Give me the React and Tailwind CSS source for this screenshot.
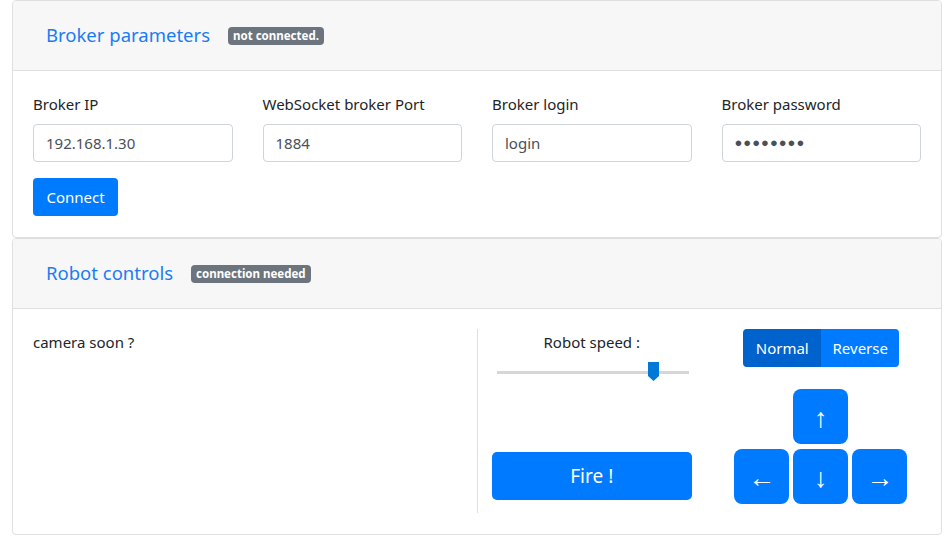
import React from "react";

const font = { fontFamily: '"Noto Sans", "Open Sans", sans-serif' };

function Field({ label, value, password }) {
  return (
    <div className="flex flex-col">
      <label className="text-[15px] leading-6 text-[#212529] mb-[8px]">{label}</label>
      <div className="h-[38px] border border-[#ced4da] rounded-[4px] bg-white px-[12px] flex items-center text-[15px] text-[#495057]">
        {password ? (
          <span className="tracking-[1px] text-[13px] text-[#495057]">●●●●●●●●</span>
        ) : (
          value
        )}
      </div>
    </div>
  );
}

function Header({ title, badge }) {
  return (
    <div className="h-[70px] bg-[#f7f7f7] border-b border-[#dfdfdf] flex items-center pl-[33px]">
      <span className="text-[18.5px] text-[#1a7cf5] leading-none">{title}</span>
      <span className="ml-[18px] bg-[#6c757d] text-white text-[11.5px] font-bold rounded-[4px] px-[5px] h-[18px] flex items-center leading-none">
        {badge}
      </span>
    </div>
  );
}

function Arrow({ children }) {
  return (
    <div className="w-[55px] h-[55px] bg-[#007bff] rounded-[8px] flex items-center justify-center text-white text-[27px] leading-none">
      {children}
    </div>
  );
}

export default function App() {
  return (
    <div className="w-[951px] h-[550px] bg-white pl-[12px]" style={font}>
      <div className="w-[930px] border border-[#dfdfdf] rounded-[4px] overflow-hidden">
        <Header title="Broker parameters" badge="not connected." />
        <div className="pt-[21px] pb-[21px] px-[20px]">
          <div className="grid grid-cols-4 gap-x-[30px]">
            <Field label="Broker IP" value="192.168.1.30" />
            <Field label="WebSocket broker Port" value="1884" />
            <Field label="Broker login" value="login" />
            <Field label="Broker password" password />
          </div>
          <div className="mt-[16px] w-[85px] h-[38px] bg-[#007bff] text-white rounded-[4px] flex items-center justify-center text-[15px]">
            Connect
          </div>
        </div>
      </div>
      <div className="w-[930px] border border-[#dfdfdf] rounded-[4px] overflow-hidden">
        <Header title="Robot controls" badge="connection needed" />
        <div className="pt-[20px] pb-[21px] px-[20px]">
          <div className="grid grid-cols-4 gap-x-[30px] h-[184px]">
            <div className="col-span-2 text-[15px] text-[#212529] leading-6 mt-[1px]">camera soon ?</div>
            <div className="relative flex flex-col items-center">
              <div className="absolute left-[-15px] top-0 bottom-0 border-l border-[#dfdfdf]"></div>
              <div className="text-[15px] text-[#212529] leading-6 mt-[1px]">Robot speed :</div>
              <div className="relative w-[192px] h-[20px] mt-[8px] ml-[2px] self-center">
                <div className="absolute left-0 right-0 top-[9px] h-[3px] bg-[#d6d6d6]"></div>
                <svg className="absolute left-[151px] top-0" width="11" height="19" viewBox="0 0 11 19">
                  <path d="M0 0 H11 V14 L5.5 19 L0 14 Z" fill="#0078d7" />
                </svg>
              </div>
              <div className="mt-auto mb-[13px] w-full h-[48px] bg-[#007bff] text-white rounded-[5px] flex items-center justify-center text-[19px]">
                Fire !
              </div>
            </div>
            <div className="flex flex-col items-center">
              <div className="flex h-[38px] rounded-[4px] overflow-hidden text-white text-[15px]">
                <div className="w-[78px] bg-[#0062cc] flex items-center justify-center">Normal</div>
                <div className="w-[78px] bg-[#007bff] flex items-center justify-center">Reverse</div>
              </div>
              <div className="mt-[22px] flex flex-col items-center gap-[5px] -ml-[1px]">
                <Arrow>↑</Arrow>
                <div className="flex gap-[4px]">
                  <Arrow>←</Arrow>
                  <Arrow>↓</Arrow>
                  <Arrow>→</Arrow>
                </div>
              </div>
            </div>
          </div>
        </div>
      </div>
    </div>
  );
}
